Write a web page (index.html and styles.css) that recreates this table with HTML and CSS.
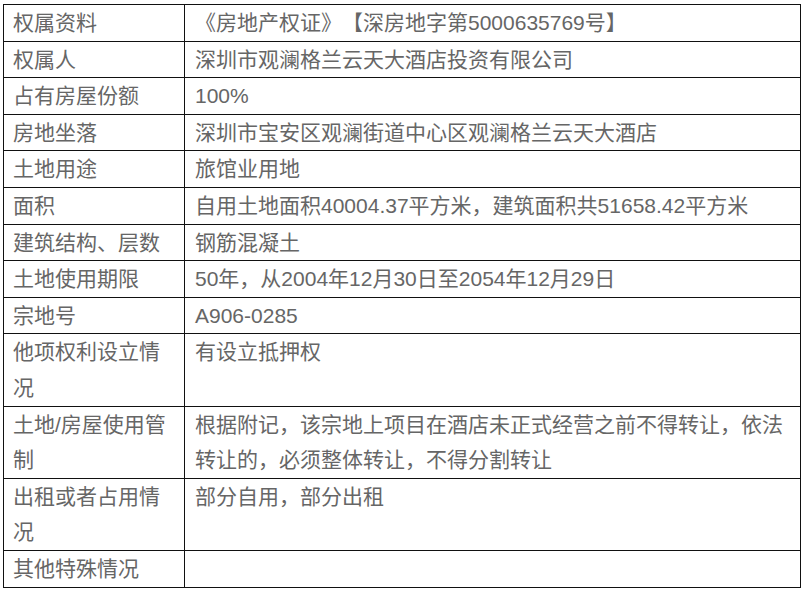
FILE: index.html
```html
<!DOCTYPE html>
<html lang="zh-CN">
<head>
<meta charset="utf-8">
<title>权属资料</title>
<link rel="stylesheet" href="styles.css">
</head>
<body>
<table class="info">
  <colgroup><col class="c1"><col class="c2"></colgroup>
  <tr><td>权属资料</td><td>《房地产权证》【深房地字第5000635769号】</td></tr>
  <tr><td>权属人</td><td>深圳市观澜格兰云天大酒店投资有限公司</td></tr>
  <tr><td>占有房屋份额</td><td>100%</td></tr>
  <tr><td>房地坐落</td><td>深圳市宝安区观澜街道中心区观澜格兰云天大酒店</td></tr>
  <tr><td>土地用途</td><td>旅馆业用地</td></tr>
  <tr><td>面积</td><td>自用土地面积40004.37平方米，建筑面积共51658.42平方米</td></tr>
  <tr><td>建筑结构、层数</td><td>钢筋混凝土</td></tr>
  <tr><td>土地使用期限</td><td>50年，从2004年12月30日至2054年12月29日</td></tr>
  <tr><td>宗地号</td><td>A906-0285</td></tr>
  <tr><td>他项权利设立情况</td><td>有设立抵押权</td></tr>
  <tr><td>土地/房屋使用管制</td><td>根据附记，该宗地上项目在酒店未正式经营之前不得转让，依法转让的，必须整体转让，不得分割转让</td></tr>
  <tr><td>出租或者占用情况</td><td>部分自用，部分出租</td></tr>
  <tr><td>其他特殊情况</td><td></td></tr>
</table>
</body>
</html>
```

FILE: styles.css
```css
html, body {
  margin: 0;
  padding: 0;
  background: #fff;
}
body {
  padding: 4px 0 0 3px;
}
.info {
  border-collapse: collapse;
  table-layout: fixed;
  width: 797px;
  font-family: "Liberation Sans", "Noto Sans CJK SC", sans-serif;
  font-size: 21px;
  line-height: 35.6px;
  color: #666;
  text-spacing-trim: space-all;
}
.c1 { width: 181px; }
.c2 { width: 616px; }
.info td {
  border: 1px solid #111;
  padding: 0 9px;
  vertical-align: top;
  height: 35.6px;
}
.info td + td {
  padding: 0 10px;
}
```
